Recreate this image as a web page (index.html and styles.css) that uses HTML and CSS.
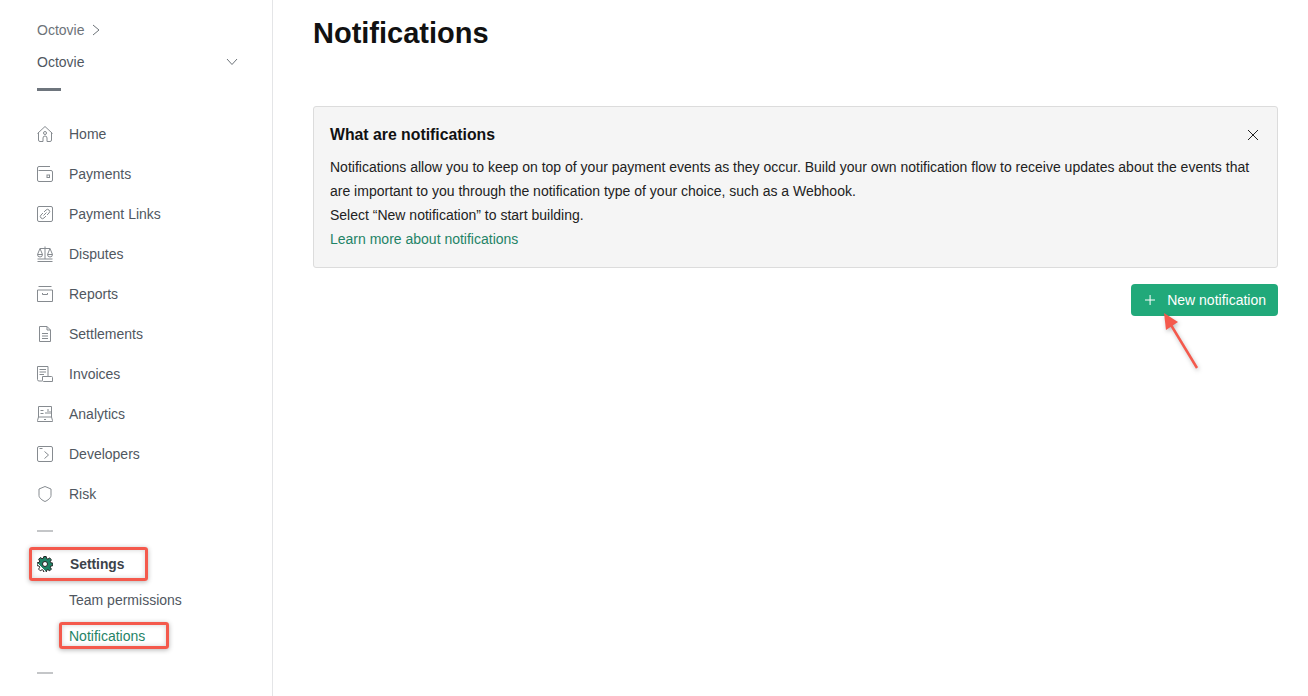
FILE: index.html
```html
<!DOCTYPE html>
<html lang="en">
<head>
  <meta charset="UTF-8" />
  <title>Notifications</title>
  <link rel="stylesheet" href="styles.css">
</head>
<body>
  <aside class="sidebar">
    <div class="crumb">
      <span>Octovie</span>
      <svg class="crumb-icon" width="10" height="12" viewBox="0 0 10 12"><path d="M2 1l6 5-6 5"/></svg>
    </div>
    <div class="account">
      <span>Octovie</span>
      <svg class="account-icon" width="12" height="8" viewBox="0 0 12 8"><path d="M1 1l5 5.500 5-5.500"/></svg>
    </div>
    <div class="rule"></div>

    <nav class="nav">
      <a class="nav-item">
        <svg class="icon" viewBox="0 0 16 16"><path d="M.5 7.500L8 .5l7.500 7M1.500 6.500V14a1.500 1.500 0 0 0 1.500 1.500h3v-3.500a2 2 0 0 1 4 0v3.500h3a1.500 1.500 0 0 0 1.500-1.500V6.500"/><circle cx="8" cy="7" r="1.500"/></svg>
        <span>Home</span>
      </a>
      <a class="nav-item">
        <svg class="icon" viewBox="0 0 16 16"><path d="M.5 5V2A1.500 1.500 0 0 1 2 .5h11M1.500 4.500H14a1.500 1.500 0 0 1 1.500 1.500v8a1.500 1.500 0 0 1-1.500 1.500H2A1.500 1.500 0 0 1 .5 14V3"/><rect x="10" y="9" width="2.500" height="2.500"/></svg>
        <span>Payments</span>
      </a>
      <a class="nav-item">
        <svg class="icon" viewBox="0 0 16 16"><rect x=".5" y=".5" width="15" height="15" rx="1.500"/><path d="M7 6l2-2a2 2 0 0 1 3 3l-2 2M9 10l-2 2a2 2 0 0 1-3-3l2-2M6.500 9.500l3-3"/></svg>
        <span>Payment Links</span>
      </a>
      <a class="nav-item">
        <svg class="icon" viewBox="0 0 16 16"><path d="M8 .5v12.500M3 2.500h10M.5 15.500h15M3 2.500L.5 8.500h5L3 2.500zM13 2.500l-2.500 6h5l-2.500-6zM.5 8.500a2.500 2.500 0 0 0 5 0M10.500 8.500a2.500 2.500 0 0 0 5 0M.5 13h15"/></svg>
        <span>Disputes</span>
      </a>
      <a class="nav-item">
        <svg class="icon" viewBox="0 0 16 16"><path d="M1.500 .5h13M.5 4h15v11.500H.5zM5.500 7v1.500h5V7"/></svg>
        <span>Reports</span>
      </a>
      <a class="nav-item">
        <svg class="icon" viewBox="0 0 16 16"><path d="M2.500 .5h7.500l3.500 3.500v11.500h-11zM10 .5V4h3.500M5 7.500h6M5 10h6M5 12.500h6"/></svg>
        <span>Settlements</span>
      </a>
      <a class="nav-item">
        <svg class="icon" viewBox="0 0 16 16"><path d="M5 15H2a1.500 1.500 0 0 1-1.500-1.500V.5h10.500v9.500M2.500 3.500H9M2.500 6H9M2.500 8.500H7M5.500 10.500h9a1 1 0 0 1 1 1v4H6.500a1 1 0 0 1-1-1z"/></svg>
        <span>Invoices</span>
      </a>
      <a class="nav-item">
        <svg class="icon" viewBox="0 0 16 16"><path d="M1.500 .5h13v10.500h-13zM1.500 11l-1 3.500v1h15v-1l-1-3.500M7 13.500h2M3.500 4.500h3M3.500 7.500h3M9 8V6M11 8V3M13 8V5"/></svg>
        <span>Analytics</span>
      </a>
      <a class="nav-item">
        <svg class="icon" viewBox="0 0 16 16"><rect x=".5" y=".5" width="15" height="15" rx="1.500"/><path d="M7.500 5.500l4 3.500-4 3.500M2.500 2.500h3"/></svg>
        <span>Developers</span>
      </a>
      <a class="nav-item">
        <svg class="icon" viewBox="0 0 16 16"><path d="M8 .5l6 2.500v6.500c0 2.500-3.500 5-6 6-2.500-1-6-3.500-6-6V3z"/></svg>
        <span>Risk</span>
      </a>
    </nav>

    <div class="dash dash-top"></div>

    <a class="nav-item nav-current">
      <svg class="icon icon-gear" viewBox="0 0 16 16">
        <defs>
          <linearGradient id="gearFill" x1="0" y1="1" x2="1" y2="0">
            <stop offset="0.300" stop-color="#fff"/>
            <stop offset="0.300" stop-color="#1f8366"/>
          </linearGradient>
        </defs>
        <path fill="url(#gearFill)" d="M6.800 .5h2.400l.4 2 1.300.6 1.800-1.100 1.700 1.700-1.100 1.800.6 1.300 2 .4v2.400l-2 .4-.6 1.300 1.100 1.800-1.700 1.700-1.800-1.100-1.300.6-.4 2H6.800l-.4-2-1.300-.6-1.800 1.100-1.700-1.700 1.100-1.800-.6-1.300-2-.4V6.800l2-.4.6-1.300-1.100-1.800 1.700-1.700 1.800 1.100 1.300-.6z"/>
        <circle class="gear-hole" cx="8" cy="8" r="2.500"/>
      </svg>
      <span>Settings</span>
    </a>
    <a class="sub-item">Team permissions</a>
    <a class="sub-item sub-current">Notifications</a>

    <div class="dash dash-bottom"></div>
  </aside>

  <main class="main">
    <h1 class="title">Notifications</h1>

    <section class="info">
      <svg class="info-close" width="12" height="12" viewBox="0 0 12 12"><path d="M1 1l10 10M11 1L1 11"/></svg>
      <h2 class="info-title">What are notifications</h2>
      <p class="info-text">Notifications allow you to keep on top of your payment events as they occur. Build your own notification flow to receive updates about the events that are important to you through the notification type of your choice, such as a Webhook.</p>
      <p class="info-text">Select “New notification” to start building.</p>
      <a class="info-link">Learn more about notifications</a>
    </section>

    <div class="actions">
      <button class="btn">
        <svg class="btn-plus" width="12" height="12" viewBox="0 0 12 12"><path d="M6 0v12M0 6h12"/></svg>
        New notification
      </button>
    </div>
  </main>

  <!-- annotations drawn over the screenshot -->
  <div class="mark mark-settings"></div>
  <div class="mark mark-notifications"></div>
  <svg class="arrow" width="44" height="64" viewBox="0 0 44 64">
    <path class="arrow-line" d="M37 59L11 16"/>
    <path class="arrow-head" d="M4 4l2 17 12-8z"/>
  </svg>
</body>
</html>
```

FILE: styles.css
```css
* {
  box-sizing: border-box;
}

html, body {
  height: 696px;
  overflow: hidden;
}

body {
  margin: 0;
  display: flex;
  position: relative;
  font-family: "Liberation Sans", Arial, sans-serif;
  font-size: 14px;
  color: #111;
  background: #fff;
}

svg {
  fill: none;
  stroke: currentColor;
  stroke-width: 1;
}

.sidebar {
  width: 273px;
  flex-shrink: 0;
  height: 696px;
  padding: 20px 34px 0 37px;
  border-right: 1px solid #e4e5e7;
  color: #50575f;
}

.crumb {
  display: flex;
  align-items: center;
  gap: 7px;
  height: 20px;
  color: #6d7379;
}

.account {
  display: flex;
  align-items: center;
  justify-content: space-between;
  height: 20px;
  margin-top: 12px;
}

.account-icon {
  color: #6d7379;
}

.rule {
  width: 24px;
  height: 3px;
  margin-top: 16px;
  background: #6e757d;
}

.nav {
  margin-top: 23px;
}

.nav-item {
  display: flex;
  align-items: center;
  gap: 16px;
  height: 40px;
}

.icon {
  width: 16px;
  height: 16px;
  flex-shrink: 0;
  color: #868b90;
}

.dash {
  width: 16px;
  height: 2px;
  background: #c4c6c8;
}

.dash-top {
  margin-top: 16px;
}

.nav-current {
  height: 36px;
  margin-top: 14px;
  font-size: 13.800px;
  font-weight: bold;
  color: #3c434a;
  gap: 17px;
}

.icon-gear {
  color: #222;
}

.gear-hole {
  fill: #fff;
  stroke: #222;
}

.sub-item {
  display: flex;
  align-items: center;
  height: 36px;
  padding-left: 32px;
}

.sub-current {
  color: #1f8366;
}

.dash-bottom {
  margin-top: 18px;
}

.main {
  flex: 1;
  padding: 0 30px 0 40px;
}

.title {
  margin: 15px 0 0;
  font-size: 29px;
  line-height: 36px;
  font-weight: bold;
  color: #111;
}

.info {
  position: relative;
  height: 162px;
  margin-top: 55px;
  padding: 17px 16px 16px;
  background: #f5f5f5;
  border: 1px solid #dcdcdc;
  border-radius: 3px;
}

.info-close {
  position: absolute;
  top: 22px;
  right: 18px;
  color: #222;
}

.info-title {
  margin: 0 0 9px;
  font-size: 15.800px;
  line-height: 22px;
  font-weight: bold;
}

.info-text {
  margin: 0;
  line-height: 24px;
  color: #222;
}

.info-link {
  display: block;
  line-height: 24px;
  color: #1f8366;
}

.actions {
  display: flex;
  justify-content: flex-end;
  margin-top: 16px;
}

.btn {
  display: flex;
  align-items: center;
  gap: 12px;
  width: 147px;
  height: 32px;
  padding: 0 12px 0 14px;
  border: none;
  border-radius: 4px;
  background: #21a97a;
  color: #fff;
  font-family: inherit;
  font-size: 14px;
  white-space: nowrap;
}

.btn-plus {
  stroke-width: 1.200;
}

/* red highlight boxes + arrow */
.mark {
  position: absolute;
  border: 3px solid #f4594c;
  border-radius: 3px;
  box-shadow: 0 1px 5px rgba(0, 0, 0, 0.3), inset 0 0 5px rgba(0, 0, 0, 0.18);
}

.mark-settings {
  left: 29px;
  top: 547px;
  width: 119px;
  height: 34px;
}

.mark-notifications {
  left: 59px;
  top: 622px;
  width: 110px;
  height: 27px;
}

.arrow {
  position: absolute;
  left: 1160px;
  top: 309px;
  filter: drop-shadow(1px 2px 2px rgba(0, 0, 0, 0.25));
}

.arrow-line {
  stroke: #f4594c;
  stroke-width: 2.500;
}

.arrow-head {
  fill: #f4594c;
  stroke: none;
}
```
